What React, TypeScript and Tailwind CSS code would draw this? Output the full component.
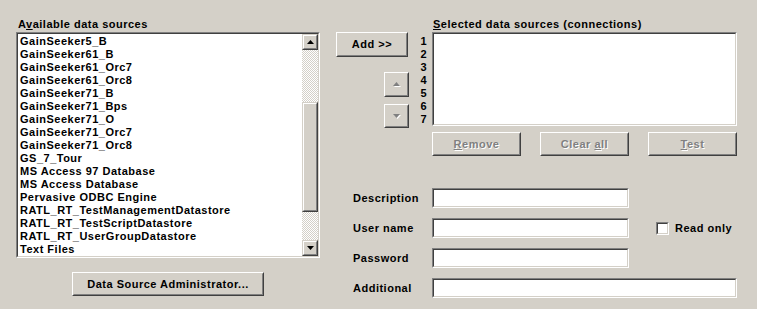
import type { ReactNode } from 'react';

const sources = [
  'GainSeeker5_B',
  'GainSeeker61_B',
  'GainSeeker61_Orc7',
  'GainSeeker61_Orc8',
  'GainSeeker71_B',
  'GainSeeker71_Bps',
  'GainSeeker71_O',
  'GainSeeker71_Orc7',
  'GainSeeker71_Orc8',
  'GS_7_Tour',
  'MS Access 97 Database',
  'MS Access Database',
  'Pervasive ODBC Engine',
  'RATL_RT_TestManagementDatastore',
  'RATL_RT_TestScriptDatastore',
  'RATL_RT_UserGroupDatastore',
  'Text Files',
];

// classic 3d frames
function Raised({ className = '', children }: { className?: string; children?: ReactNode }) {
  return (
    <div className={`border border-t-white border-l-white border-r-[#404040] border-b-[#404040] ${className}`}>
      <div className="h-full w-full border border-t-[#d4d0c8] border-l-[#d4d0c8] border-r-[#808080] border-b-[#808080] flex items-center justify-center">
        {children}
      </div>
    </div>
  );
}

function ScrollPart({ className = '', children }: { className?: string; children?: ReactNode }) {
  return (
    <div className={`bg-[#d4d0c8] border border-t-[#d4d0c8] border-l-[#d4d0c8] border-r-[#404040] border-b-[#404040] ${className}`}>
      <div className="h-full w-full border border-t-white border-l-white border-r-[#808080] border-b-[#808080] flex items-center justify-center">
        {children}
      </div>
    </div>
  );
}

function Sunken({ className = '', children }: { className?: string; children?: ReactNode }) {
  return (
    <div className={`border border-t-[#808080] border-l-[#808080] border-r-white border-b-white ${className}`}>
      <div className="h-full w-full border border-t-[#404040] border-l-[#404040] border-r-[#d4d0c8] border-b-[#d4d0c8] bg-white flex">
        {children}
      </div>
    </div>
  );
}

function Tri({ up, color = '#000' }: { up?: boolean; color?: string }) {
  return (
    <svg width="7" height="4" viewBox="0 0 7 4">
      <polygon points={up ? '3.5,0 7,4 0,4' : '0,0 7,0 3.5,4'} fill={color} />
    </svg>
  );
}

function GrayTri({ up }: { up?: boolean }) {
  return (
    <div className="relative w-[8px] h-[5px]">
      <div className="absolute left-[1px] top-[1px]">
        <Tri up={up} color="#fff" />
      </div>
      <div className="absolute left-0 top-0">
        <Tri up={up} color="#808080" />
      </div>
    </div>
  );
}

const disabled = 'text-[#808080] [text-shadow:1px_1px_0_#fff]';

export default function App() {
  return (
    <div className="w-[757px] h-[309px] bg-[#d4d0c8] flex font-['Liberation_Sans',Arial,sans-serif] text-[11px] font-bold leading-[13px] tracking-[0.5px] text-black">
      {/* left: available sources */}
      <div className="ml-[16px] w-[304px] flex flex-col">
        <div className="mt-[18px] h-[14px] pl-[2px]">
          A<u>v</u>ailable data sources
        </div>
        <Sunken className="h-[226px]">
          <div className="flex-1 pl-[2px] pt-[1px] overflow-hidden">
            {sources.map((s) => (
              <div key={s} className="h-[13px] whitespace-nowrap">
                {s}
              </div>
            ))}
          </div>
          <div className="w-[16px] flex flex-col bg-[repeating-conic-gradient(#fff_0_25%,#d4d0c8_0_50%)] bg-[length:2px_2px]">
            <ScrollPart className="h-[16px]">
              <Tri up />
            </ScrollPart>
            <div className="h-[52px]" />
            <ScrollPart className="h-[110px]" />
            <div className="flex-1" />
            <ScrollPart className="h-[16px]">
              <Tri />
            </ScrollPart>
          </div>
        </Sunken>
        <Raised className="mt-[14px] ml-[56px] w-[192px] h-[24px]">Data Source Administrator...</Raised>
      </div>

      {/* right area */}
      <div className="ml-[16px] flex flex-col">
        <div className="flex">
          <div className="w-[73px] flex flex-col">
            <Raised className="mt-[32px] w-[72px] h-[25px]">Add &gt;&gt;</Raised>
            <Raised className="mt-[15px] ml-[48px] w-[25px] h-[25px]">
              <GrayTri up />
            </Raised>
            <Raised className="mt-[7px] ml-[48px] w-[25px] h-[24px]">
              <GrayTri />
            </Raised>
          </div>
          <div className="w-[23px] mt-[35px] pr-[5px] text-right">
            {[1, 2, 3, 4, 5, 6, 7].map((n) => (
              <div key={n} className="h-[13px]">
                {n}
              </div>
            ))}
          </div>
          <div className="w-[305px] flex flex-col">
            <div className="mt-[18px] h-[14px] pl-[1px]">
              <u>S</u>elected data sources (connections)
            </div>
            <Sunken className="h-[94px]" />
            <div className="mt-[6px] flex gap-[19px]">
              <Raised className={`w-[89px] h-[24px] ${disabled}`}>
                <span>
                  <u>R</u>emove
                </span>
              </Raised>
              <Raised className={`w-[89px] h-[24px] ${disabled}`}>
                <span>
                  Clear <u>a</u>ll
                </span>
              </Raised>
              <Raised className={`w-[89px] h-[24px] ${disabled}`}>
                <span>
                  <u>T</u>est
                </span>
              </Raised>
            </div>
          </div>
        </div>

        {/* connection details */}
        <div className="mt-[32px] pl-[17px] flex flex-col gap-[10px]">
          <div className="flex items-center h-[20px]">
            <div className="w-[79px]">Description</div>
            <Sunken className="w-[197px] h-[20px]" />
          </div>
          <div className="flex items-center h-[20px]">
            <div className="w-[79px]">User name</div>
            <Sunken className="w-[197px] h-[20px]" />
            <Sunken className="ml-[27px] w-[13px] h-[13px]" />
            <div className="ml-[6px]">Read only</div>
          </div>
          <div className="flex items-center h-[20px]">
            <div className="w-[79px]">Password</div>
            <Sunken className="w-[197px] h-[20px]" />
          </div>
          <div className="flex items-center h-[20px]">
            <div className="w-[79px]">Additional</div>
            <Sunken className="w-[305px] h-[20px]" />
          </div>
        </div>
      </div>
    </div>
  );
}
